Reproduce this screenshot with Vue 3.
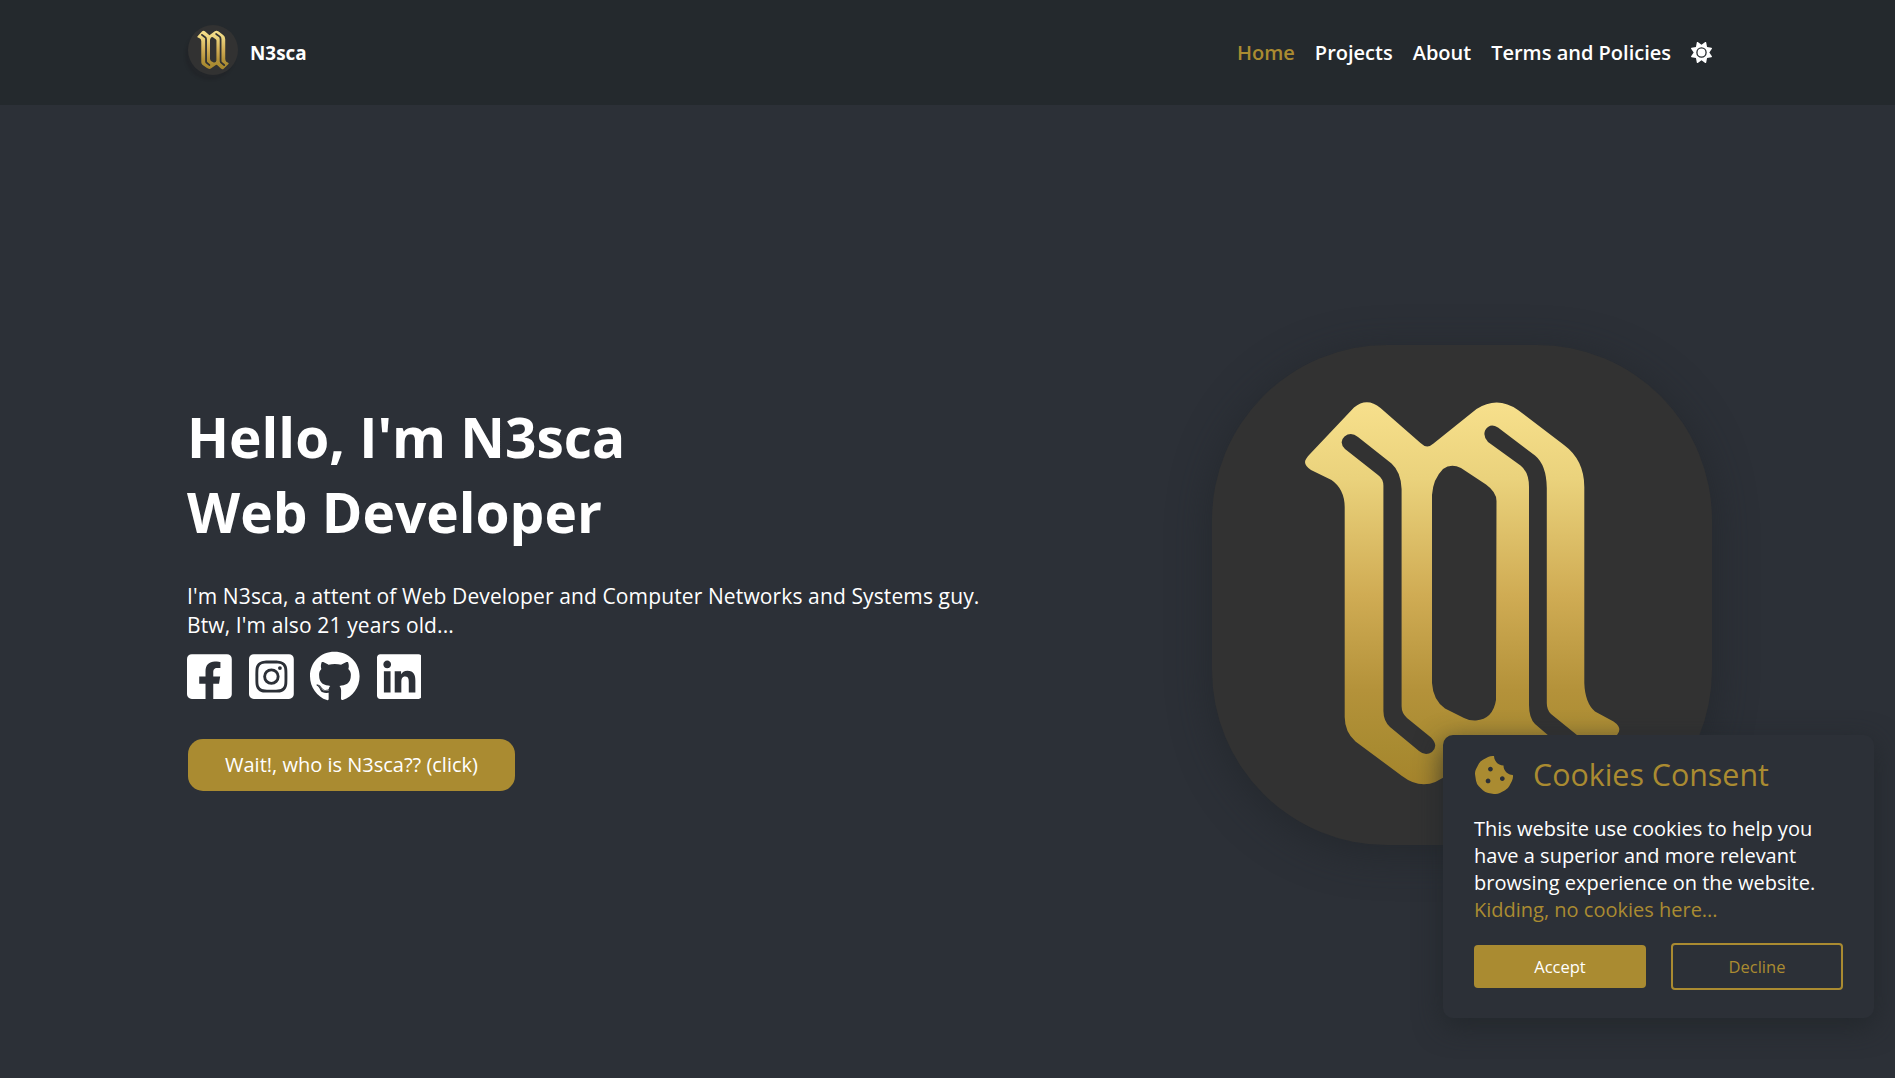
<script setup>
const links = [
  { label: 'Home', active: true },
  { label: 'Projects' },
  { label: 'About' },
  { label: 'Terms and Policies' },
]

const socials = [
  {
    name: 'Facebook',
    width: 448,
    path: 'M400 32H48A48 48 0 0 0 0 80v352a48 48 0 0 0 48 48h137.25V327.69h-63V256h63v-54.64c0-62.15 37-96.48 93.67-96.48 27.14 0 55.52 4.84 55.52 4.84v61h-31.27c-30.81 0-40.42 19.12-40.42 38.73V256h68.78l-11 71.69h-57.78V480H400a48 48 0 0 0 48-48V80a48 48 0 0 0-48-48z',
  },
  {
    name: 'Instagram',
    width: 448,
    path: 'M224,202.66A53.34,53.34,0,1,0,277.36,256,53.38,53.38,0,0,0,224,202.66Zm124.71-41a54,54,0,0,0-30.41-30.41c-21-8.29-71-6.43-94.3-6.43s-73.25-1.93-94.31,6.43a54,54,0,0,0-30.41,30.41c-8.28,21-6.43,71.05-6.43,94.33S91,329.26,99.32,350.33a54,54,0,0,0,30.41,30.41c21,8.29,71,6.43,94.31,6.43s73.24,1.93,94.3-6.43a54,54,0,0,0,30.41-30.41c8.35-21,6.43-71.05,6.43-94.33S357.1,182.74,348.75,161.67ZM224,338a82,82,0,1,1,82-82A81.9,81.9,0,0,1,224,338Zm85.38-148.3a19.14,19.14,0,1,1,19.13-19.14A19.1,19.1,0,0,1,309.42,189.74ZM400,32H48A48,48,0,0,0,0,80V432a48,48,0,0,0,48,48H400a48,48,0,0,0,48-48V80A48,48,0,0,0,400,32ZM382.88,322c-1.29,25.63-7.14,48.34-25.85,67s-41.4,24.63-67,25.85c-26.41,1.49-105.59,1.49-132,0-25.63-1.29-48.26-7.15-67-25.85s-24.63-41.42-25.85-67c-1.49-26.42-1.49-105.61,0-132,1.29-25.63,7.07-48.34,25.85-67s41.47-24.56,67-25.78c26.41-1.49,105.59-1.49,132,0,25.63,1.29,48.33,7.15,67,25.85s24.63,41.42,25.85,67.05C384.37,216.44,384.37,295.56,382.88,322Z',
  },
  {
    name: 'GitHub',
    width: 496,
    path: 'M165.9 397.4c0 2-2.3 3.6-5.2 3.6-3.3.3-5.6-1.3-5.6-3.6 0-2 2.3-3.6 5.2-3.6 3-.3 5.6 1.3 5.6 3.6zm-31.1-4.5c-.7 2 1.3 4.3 4.3 4.9 2.6 1 5.6 0 6.2-2s-1.3-4.3-4.3-5.2c-2.6-.7-5.5.3-6.2 2.3zm44.2-1.7c-2.9.7-4.9 2.6-4.6 4.9.3 2 2.9 3.3 5.9 2.6 2.9-.7 4.9-2.6 4.6-4.6-.3-1.9-3-3.2-5.9-2.9zM244.8 8C106.1 8 0 113.3 0 252c0 110.9 69.8 205.8 169.5 239.2 12.8 2.3 17.3-5.6 17.3-12.1 0-6.2-.3-40.4-.3-61.4 0 0-70 15-84.7-29.8 0 0-11.4-29.1-27.8-36.6 0 0-22.9-15.7 1.6-15.4 0 0 24.9 2 38.6 25.8 21.9 38.6 58.6 27.5 72.9 20.9 2.3-16 8.8-27.1 16-33.7-55.9-6.2-112.3-14.3-112.3-110.5 0-27.5 7.6-41.3 23.6-58.9-2.6-6.5-11.1-33.3 2.6-67.9 20.9-6.5 69 27 69 27 20-5.6 41.5-8.5 62.8-8.5s42.8 2.9 62.8 8.5c0 0 48.1-33.6 69-27 13.7 34.7 5.2 61.4 2.6 67.9 16 17.7 25.8 31.5 25.8 58.9 0 96.5-58.9 104.2-114.8 110.5 9.2 7.9 17 22.9 17 46.4 0 33.7-.3 75.4-.3 83.6 0 6.5 4.6 14.4 17.3 12.1C428.2 457.8 496 362.9 496 252 496 113.3 383.5 8 244.8 8zM97.2 352.9c-1.3 1-1 3.3.7 5.2 1.6 1.6 3.9 2.3 5.2 1 1.3-1 1-3.3-.7-5.2-1.6-1.6-3.9-2.3-5.2-1zm-10.8-8.1c-.7 1.3.3 2.9 2.3 3.9 1.6 1 3.6.7 4.3-.7.7-1.3-.3-2.9-2.3-3.9-2-.6-3.6-.3-4.3.7zm32.4 35.6c-1.6 1.3-1 4.3 1.3 6.2 2.3 2.3 5.2 2.6 6.5 1 1.3-1.3.7-4.3-1.3-6.2-2.2-2.3-5.2-2.6-6.5-1zm-11.4-14.7c-1.6 1-1.6 3.6 0 5.9 1.6 2.3 4.3 3.3 5.6 2.3 1.6-1.3 1.6-3.9 0-6.2-1.4-2.3-4-3.3-5.6-2z',
  },
  {
    name: 'LinkedIn',
    width: 448,
    path: 'M416 32H31.9C14.3 32 0 46.5 0 64.3v383.4C0 465.5 14.3 480 31.9 480H416c17.6 0 32-14.5 32-32.3V64.3c0-17.8-14.4-32.3-32-32.3zM135.4 416H69V202.2h66.5V416zm-33.2-243c-21.3 0-38.5-17.3-38.5-38.5S80.9 96 102.2 96c21.2 0 38.5 17.3 38.5 38.5 0 21.3-17.2 38.5-38.5 38.5zm282.1 243h-66.4V312c0-24.8-.5-56.7-34.5-56.7-34.6 0-39.9 27-39.9 54.9V416h-66.4V202.2h63.7v29.2h.9c8.9-16.8 30.6-34.5 62.2-34.5 66.5 0 79.9 43.8 79.9 100.9V416z',
  },
]
</script>

<template>
  <div class="page">
    <svg class="defs" width="0" height="0" aria-hidden="true">
      <defs>
        <linearGradient id="gold" gradientUnits="userSpaceOnUse" x1="0" y1="57" x2="0" y2="441">
          <stop offset="0" stop-color="#f7e08c" />
          <stop offset="0.2" stop-color="#ead27c" />
          <stop offset="0.5" stop-color="#d0ac54" />
          <stop offset="0.75" stop-color="#b4923a" />
          <stop offset="0.9" stop-color="#a98b31" />
          <stop offset="1" stop-color="#a5842c" />
        </linearGradient>
        <symbol id="emblem" viewBox="0 0 500 500">
          <path
            fill="url(#gold)"
            fill-rule="evenodd"
            d="M93 117C93 115 95 112 98 109L142 62.5Q155 52 168.500 63L208.500 98Q215 104.500 221.500 98.500L264.500 64Q285.500 50.500 306 65L352 100Q372.300 115 372.300 142V338Q373 358 383 366.500L401.500 376.500Q411 383 405 390L357 436.500Q345 447 332 437L291 401Q284 395 278 400.500L236 429Q213 448.500 190 431L143.500 396.500Q132.800 387 132.700 372V162Q132.500 144 119.500 135L99 125Q93 121 93 117Z
            M133 104Q126.500 97 132.500 91.500Q139 86.500 146 92L179.500 118.500Q189 127 189.600 144V361Q189.500 368 195 373L219 392.500Q227 401 220 407Q213.500 411.500 207 406L178 382Q171.500 376 171.400 366V141Q171.500 134 166 130Z
            M276 97Q270.500 91 273.300 85Q278 77.500 286 82.500L323 110.500Q334.500 120 334.800 143V358Q334.800 365 339 369L368 392.500Q375 400 369 407Q361.500 412 355 406.500L323 379Q317 373 317 360V142Q317 127 308.500 120.500Z
            M220 150Q221 134 231 124Q239 118 249 123L274 139.500Q284.500 147 284.500 156L284 355Q281 374 264 375.500Q258 376 252 373L233 363.500Q221 355 220 338Z"
          />
        </symbol>
      </defs>
    </svg>

    <header class="topbar">
      <div class="wrap topbar-inner">
        <div class="brand">
          <div class="avatar">
            <svg width="50" height="50"><use href="#emblem" /></svg>
          </div>
          <span class="brand-name">N3sca</span>
        </div>
        <nav class="nav">
          <a v-for="link in links" :key="link.label" class="nav-link" :class="{ active: link.active }">{{ link.label }}</a>
          <svg class="sun" viewBox="0 0 512 512">
            <path fill="currentColor" d="M361.500 1.200c5 2.100 8.600 6.600 9.600 11.900L391 121l107.900 19.800c5.300 1 9.800 4.600 11.900 9.600s1.500 10.700-1.600 15.200L446.900 256l62.300 90.300c3.100 4.500 3.700 10.200 1.600 15.200s-6.600 8.600-11.900 9.600L391 391 371.100 498.900c-1 5.300-4.600 9.800-9.600 11.900s-10.700 1.500-15.200-1.600L256 446.900l-90.300 62.300c-4.500 3.100-10.200 3.700-15.200 1.600s-8.600-6.600-9.600-11.900L121 391 13.100 371.100c-5.300-1-9.800-4.600-11.900-9.600s-1.500-10.700 1.600-15.200L65.100 256 2.800 165.700c-3.100-4.500-3.700-10.200-1.600-15.200s6.600-8.600 11.900-9.600L121 121 140.900 13.100c1-5.300 4.600-9.800 9.600-11.900s10.700-1.500 15.200 1.600L256 65.100 346.300 2.800c4.500-3.100 10.200-3.700 15.200-1.600zM160 256a96 96 0 1 1 192 0 96 96 0 1 1 -192 0zm224 0a128 128 0 1 0 -256 0 128 128 0 1 0 256 0z" />
          </svg>
        </nav>
      </div>
    </header>

    <main class="wrap hero">
      <section class="intro">
        <h1>Hello, I'm N3sca<br />Web Developer</h1>
        <p>I'm N3sca, a attent of Web Developer and Computer Networks and Systems guy.<br />Btw, I'm also 21 years old...</p>
        <div class="socials">
          <svg
            v-for="item in socials"
            :key="item.name"
            class="social"
            :viewBox="`0 0 ${item.width} 512`"
            :aria-label="item.name"
          >
            <path fill="currentColor" :d="item.path" />
          </svg>
        </div>
        <button class="cta">Wait!, who is N3sca?? (click)</button>
      </section>
      <div class="portrait">
        <svg width="500" height="500"><use href="#emblem" /></svg>
      </div>
    </main>

    <aside class="cookies">
      <div class="cookies-head">
        <svg class="cookie" viewBox="0 0 512 512">
          <path fill="currentColor" d="M510.520 255.820c-69.970-.85-126.470-57.690-126.470-127.860-70.170 0-127-56.490-127.860-126.450-27.260-4.140-55.130.3-79.720 12.820l-69.130 35.220a132.221 132.221 0 0 0-57.790 57.810l-35.100 68.880a132.645 132.645 0 0 0-12.820 80.950l12.080 76.270a132.521 132.521 0 0 0 37.160 72.960l54.770 54.760a132.036 132.036 0 0 0 72.710 37.060l76.710 12.150c27.510 4.360 55.700-.11 80.530-12.760l69.130-35.210a132.273 132.273 0 0 0 57.790-57.810l35.100-68.880c12.560-24.640 17.010-52.580 12.910-79.910zM176 368c-17.670 0-32-14.330-32-32s14.330-32 32-32 32 14.330 32 32-14.330 32-32 32zm32-160c-17.670 0-32-14.330-32-32s14.330-32 32-32 32 14.330 32 32-14.330 32-32 32zm160 128c-17.670 0-32-14.330-32-32s14.330-32 32-32 32 14.330 32 32-14.330 32-32 32z" />
        </svg>
        <h2>Cookies Consent</h2>
      </div>
      <p>This website use cookies to help you have a superior and more relevant browsing experience on the website. <span>Kidding, no cookies here...</span></p>
      <div class="actions">
        <button class="accept">Accept</button>
        <button class="decline">Decline</button>
      </div>
    </aside>
  </div>
</template>

<style>
body {
  margin: 0;
  background: #2c3037;
}
</style>

<style scoped>
.page {
  position: relative;
  height: 1078px;
  overflow: hidden;
  background: #2c3037;
  color: #fff;
  font-family: "Open Sans", "Noto Sans", sans-serif;
  display: flex;
  flex-direction: column;
}

.defs {
  position: absolute;
}

.wrap {
  width: 1524px;
  margin-left: 188px;
}

.topbar {
  height: 105px;
  flex: none;
  background: #24292d;
}

.topbar-inner {
  height: 100%;
  display: flex;
  justify-content: space-between;
  align-items: center;
}

.brand {
  display: flex;
  align-items: center;
  gap: 12px;
}

.avatar {
  width: 50px;
  height: 50px;
  margin-bottom: 5px;
  border-radius: 50%;
  background: #323232;
  box-shadow: -3px 5px 2px rgba(32, 33, 38, 0.5);
}

.avatar svg,
.portrait svg {
  display: block;
}

.brand-name {
  font-size: 18.9px;
  font-weight: 700;
}

.nav {
  display: flex;
  align-items: center;
  gap: 20px;
}

.nav-link {
  font-size: 20px;
  font-weight: 600;
}

.nav-link.active {
  color: #aa8b31;
}

.sun {
  width: 21px;
  height: 21px;
}

.hero {
  display: flex;
  justify-content: space-between;
  align-items: flex-start;
}

.intro {
  padding-top: 294px;
}

h1 {
  margin: 0 0 0 -1px;
  font-size: 55px;
  line-height: 75px;
  font-weight: 700;
}

.intro p {
  margin: 33px 0 0 -1px;
  font-size: 21px;
  line-height: 29px;
  letter-spacing: 0.12px;
}

.socials {
  display: flex;
  gap: 16.7px;
  margin: 11px 0 0 -0.7px;
}

.social {
  height: 51.2px;
}

.cta {
  display: block;
  width: 327px;
  height: 52px;
  margin-top: 37px;
  padding: 0 0 2px;
  border: 0;
  border-radius: 15px;
  background: #aa8b31;
  color: #fff;
  font: 400 20px "Open Sans", sans-serif;
}

.portrait {
  width: 500px;
  height: 500px;
  margin-top: 240px;
  border-radius: 35%;
  background: #323232;
  box-shadow: 0 8px 40px rgba(33, 37, 41, 0.7);
}

.cookies {
  position: absolute;
  right: 21px;
  bottom: 60px;
  width: 431px;
  height: 283px;
  box-sizing: border-box;
  padding: 19px 31px 0;
  border-radius: 10px;
  background: #2c3037;
  box-shadow: 0 8px 28px rgba(33, 37, 41, 0.8);
}

.cookies-head {
  display: flex;
  align-items: center;
  gap: 20px;
  height: 41px;
  padding-left: 1px;
  color: #aa8b31;
}

.cookie {
  width: 38px;
  height: 38px;
}

h2 {
  margin: 0;
  font-size: 30.4px;
  font-weight: 400;
}

.cookies p {
  margin: 20px 0 0;
  font-size: 20px;
  line-height: 27px;
  font-weight: 500;
}

.cookies p span {
  display: block;
  color: #aa8b31;
  font-weight: 400;
}

.actions {
  display: flex;
  align-items: center;
  gap: 25px;
  margin-top: 20px;
}

.actions button {
  width: 172px;
  box-sizing: border-box;
  padding: 0;
  border-radius: 4px;
  font: 500 16.5px "Open Sans", sans-serif;
}

.actions .accept {
  height: 43px;
  border: 0;
  background: #aa8b31;
  color: #fff;
}

.actions .decline {
  height: 47px;
  border: 2px solid #aa8b31;
  background: transparent;
  color: #aa8b31;
  font-weight: 400;
}
</style>
